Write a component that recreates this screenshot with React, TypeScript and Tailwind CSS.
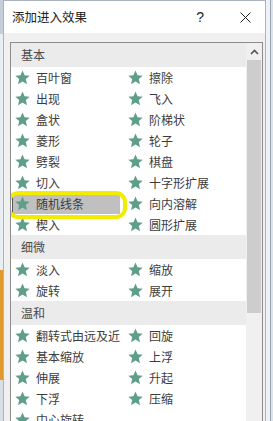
import React from "react";

const font = { fontFamily: '"Noto Sans CJK SC", "Noto Sans", sans-serif' };

function Star() {
  return (
    <svg width="15" height="15" viewBox="0 0 24 24" className="shrink-0">
      <path
        d="M12 0.8l3.3 7.6 8.2.7-6.2 5.4 1.9 8.1L12 18.3l-7.2 4.3 1.9-8.1L0.5 9.1l8.2-.7z"
        fill="#5f9e8b"
      />
    </svg>
  );
}

type Row = [string, string | null];

const groups: { title: string; rows: Row[] }[] = [
  {
    title: "基本",
    rows: [
      ["百叶窗", "擦除"],
      ["出现", "飞入"],
      ["盒状", "阶梯状"],
      ["菱形", "轮子"],
      ["劈裂", "棋盘"],
      ["切入", "十字形扩展"],
      ["随机线条", "向内溶解"],
      ["楔入", "圆形扩展"],
    ],
  },
  {
    title: "细微",
    rows: [
      ["淡入", "缩放"],
      ["旋转", "展开"],
    ],
  },
  {
    title: "温和",
    rows: [
      ["翻转式由远及近", "回旋"],
      ["基本缩放", "上浮"],
      ["伸展", "升起"],
      ["下浮", "压缩"],
      ["中心旋转", null],
    ],
  },
];

function Item({ label, selected }: { label: string; selected?: boolean }) {
  return (
    <div
      className={
        selected
          ? "relative flex items-center h-[21px] ml-[1px] mr-[4px] pl-[2px] gap-[6px] bg-[#c0c0c0] border-l border-[#555]"
          : "flex items-center h-[21px] pl-[4px] gap-[6px]"
      }
    >
      <Star />
      <span className="text-[12px] leading-none text-[#3c3c3c] whitespace-nowrap">{label}</span>
    </div>
  );
}

export default function App() {
  return (
    <div className="w-[273px] h-[421px] overflow-hidden flex bg-[#e6ecf2]" style={font}>
      <div className="w-[3px] flex flex-col shrink-0">
        <div className="h-[34px] bg-[#c3ceda]" />
        <div className="h-[236px] bg-[#e9eef3]" />
        <div className="h-[110px] bg-[#e39a2c]" />
        <div className="flex-1 bg-[#d8dee5]" />
      </div>
      <div className="w-[263px] shrink-0 flex flex-col bg-[#f0f0f0] border-x border-t border-[#a9b4c0]">
        <div className="h-[32px] bg-white flex items-center pl-[8px] pr-[10px] shrink-0">
          <span className="text-[12.5px] text-[#222]">添加进入效果</span>
          <span className="ml-auto mr-[36px] text-[14px] text-[#222]" style={{ fontFamily: '"Liberation Sans", sans-serif' }}>?</span>
          <svg width="11" height="11" viewBox="0 0 11 11" className="mr-[4px]">
            <path d="M0.5 0.5L10.5 10.5M10.5 0.5L0.5 10.5" stroke="#222" strokeWidth="1" />
          </svg>
        </div>
        <div className="flex-1 pt-[9px] pl-[6px] pr-[2px] flex">
          <div className="flex-1 border border-[#8c8c8c] bg-white flex overflow-hidden">
            <div className="flex-1 flex flex-col relative">
              {groups.map((g) => (
                <div key={g.title} className="flex flex-col">
                  <div className="h-[24px] bg-[#ebebeb] flex items-center pl-[10px] text-[12px] text-[#4a4a4a]">
                    {g.title}
                  </div>
                  <div className="grid grid-cols-[113px_1fr]">
                    {g.rows.map(([a, b]) => (
                      <React.Fragment key={a}>
                        <Item label={a} selected={a === "随机线条"} />
                        {b ? <Item label={b} /> : <div />}
                      </React.Fragment>
                    ))}
                  </div>
                </div>
              ))}
              <div className="absolute left-[-4px] top-[148px] w-[120px] h-[28px] rounded-[11px] border-[4px] border-[#f3ec00]" />
            </div>
            <div className="w-[16px] shrink-0 flex flex-col bg-[#f0f0f0]">
              <div className="h-[17px] flex items-center justify-center">
                <svg width="9" height="6" viewBox="0 0 9 6">
                  <path d="M1 5L4.5 1.5L8 5" stroke="#555" strokeWidth="1.6" fill="none" />
                </svg>
              </div>
              <div className="h-[253px] ml-[1px] mr-[1px] bg-[#cdcdcd]" />
              <div className="flex-1" />
            </div>
          </div>
        </div>
      </div>
      <div className="flex-1 flex">
        <div className="w-[4px] bg-[#eef2f6]" />
        <div className="w-[1px] bg-[#9aa4ae]" />
        <div className="flex-1 bg-[#dde3ea]" />
      </div>
    </div>
  );
}
